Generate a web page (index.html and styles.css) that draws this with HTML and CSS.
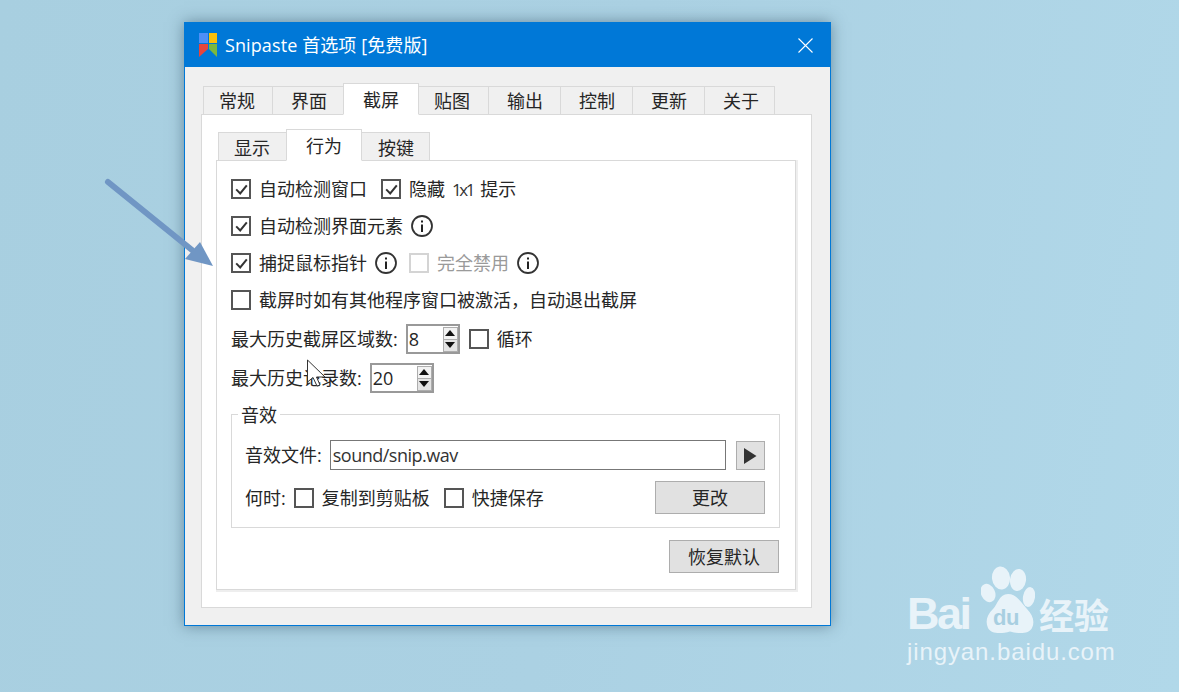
FILE: index.html
```html
<!DOCTYPE html>
<html lang="zh-CN">
<head>
<meta charset="utf-8">
<title>Snipaste 首选项</title>
<link rel="stylesheet" href="styles.css">
</head>
<body>
<svg width="0" height="0" class="defs">
  <symbol id="tick" viewBox="0 0 20 20"><path d="M5.2 10.4 L9.2 14.4 L15.8 6.4" fill="none" stroke="#333" stroke-width="2"/></symbol>
  <symbol id="info" viewBox="0 0 22 22"><circle cx="11" cy="11" r="10" fill="none" stroke="#333" stroke-width="1.8"/><rect x="10" y="9.5" width="2" height="7.5" fill="#222"/><rect x="10" y="5.5" width="2" height="2" fill="#222"/></symbol>
</svg>

<div class="window">
  <header class="titlebar">
    <svg class="logo" width="18" height="24" viewBox="0 0 18 24">
      <rect x="0" y="0" width="9" height="10" fill="#4f8ff7"/>
      <rect x="10" y="0" width="8" height="10" fill="#fbc00a"/>
      <polygon points="0,11 9,11 9,16 0,24" fill="#e8453c"/>
      <polygon points="10,11 18,11 18,24 10,16" fill="#7cb83e"/>
    </svg>
    <span class="title">Snipaste 首选项 [免费版]</span>
    <svg class="close" width="15" height="15" viewBox="0 0 15 15"><path d="M0.5 0.5 L14.5 14.5 M14.5 0.5 L0.5 14.5" stroke="#fff" stroke-width="1.1" fill="none"/></svg>
  </header>

  <div class="body">
    <nav class="tabs">
      <div class="tab tab-first">常规</div>
      <div class="tab tab-b">界面</div>
      <div class="tab tab-on">截屏</div>
      <div class="tab tab-c">贴图</div>
      <div class="tab">输出</div>
      <div class="tab">控制</div>
      <div class="tab">更新</div>
      <div class="tab tab-last">关于</div>
    </nav>
    <section class="pane">
      <nav class="subtabs">
        <div class="tab sub sub-first">显示</div>
        <div class="tab sub sub-on">行为</div>
        <div class="tab sub sub-last">按键</div>
      </nav>
      <div class="subpane">
        <div class="row">
          <span class="cb"><svg width="20" height="20"><use href="#tick"/></svg></span><span class="lbl">自动检测窗口</span>
          <span class="cb cb-next"><svg width="20" height="20"><use href="#tick"/></svg></span><span class="lbl">隐藏<span class="tight">1x1</span>提示</span>
        </div>
        <div class="row">
          <span class="cb"><svg width="20" height="20"><use href="#tick"/></svg></span><span class="lbl">自动检测界面元素</span>
          <svg class="info" width="22" height="22"><use href="#info"/></svg>
        </div>
        <div class="row">
          <span class="cb"><svg width="20" height="20"><use href="#tick"/></svg></span><span class="lbl">捕捉鼠标指针</span>
          <svg class="info" width="22" height="22"><use href="#info"/></svg>
          <span class="cb cb-off"></span><span class="lbl lbl-off">完全禁用</span>
          <svg class="info" width="22" height="22"><use href="#info"/></svg>
        </div>
        <div class="row">
          <span class="cb"></span><span class="lbl">截屏时如有其他程序窗口被激活，自动退出截屏</span>
        </div>
        <div class="row row-spin">
          <span class="text">最大历史截屏区域数:</span>
          <div class="spin spin-a"><span class="spinval">8</span>
            <span class="stepper"><span class="step step-up"><i class="up"></i></span><span class="step"><i class="down"></i></span></span>
          </div>
          <span class="cb cb-loop"></span><span class="lbl">循环</span>
        </div>
        <div class="row row-spin row-spin2">
          <span class="text">最大历史记录数:</span>
          <div class="spin spin-b"><span class="spinval">20</span>
            <span class="stepper"><span class="step step-up"><i class="up"></i></span><span class="step"><i class="down"></i></span></span>
          </div>
        </div>
        <div class="group">
          <span class="legend">音效</span>
          <div class="grow">
            <span class="text">音效文件:</span>
            <div class="field">sound/snip.wav</div>
            <button class="btn play"><svg width="13" height="16" viewBox="0 0 13 16"><polygon points="0,0 12.5,8 0,16" fill="#333"/></svg></button>
          </div>
          <div class="grow grow2">
            <span class="text">何时:</span>
            <span class="cb cb-when"></span><span class="lbl">复制到剪贴板</span>
            <span class="cb cb-next"></span><span class="lbl">快捷保存</span>
            <button class="btn change">更改</button>
          </div>
        </div>
        <div class="foot"><button class="btn restore">恢复默认</button></div>
      </div>
    </section>
  </div>
</div>

<svg class="overlay" width="1179" height="692" viewBox="0 0 1179 692">
  <path d="M108 182 L192 250" stroke="#7096c4" stroke-width="6" stroke-linecap="round" fill="none"/>
  <polygon points="213,266 185,259 200,242" fill="#7096c4"/>
  <polygon points="307.5,360 307.5,382 313,377.5 317,386 320,385 316.5,377 325,377" fill="#fff" stroke="#333" stroke-width="1"/>
</svg>

<div class="mark">
  <div class="mark-top">
    <span class="mark-bai">Bai</span>
    <span class="paw">
      <svg width="54" height="70" viewBox="0 0 54 70">
        <ellipse cx="20" cy="12" rx="9" ry="11.5" fill="#e8f3f9" transform="rotate(-6 20 12)"/>
        <ellipse cx="37" cy="14" rx="8" ry="11" fill="#e8f3f9" transform="rotate(8 37 14)"/>
        <ellipse cx="7" cy="27" rx="7" ry="9.5" fill="#e8f3f9" transform="rotate(-25 7 27)"/>
        <ellipse cx="48" cy="31" rx="6" ry="10" fill="#e8f3f9" transform="rotate(10 48 31)"/>
        <path d="M27 28 C36 28 40 37 46 43 C52 49 54 56 51 62 C48 68 38 68 29 65.5 C20 68 10 68 7 62 C4 55 6 49 12 43 C17 38 18 28 27 28 Z" fill="#e8f3f9"/>
      </svg>
      <span class="mark-du">du</span>
    </span>
    <span class="mark-cn">经验</span>
  </div>
  <div class="mark-url">jingyan.baidu.com</div>
</div>
</body>
</html>
```
FILE: styles.css
```css
* { box-sizing: border-box; }
html, body { margin: 0; height: 100%; }
body {
  width: 1179px;
  height: 692px;
  overflow: hidden;
  position: relative;
  background: linear-gradient(100deg, #a8cfe0 0%, #abd1e3 50%, #b1d8e9 100%);
  font-family: "Open Sans", "Noto Sans CJK SC", sans-serif;
  font-size: 18px;
  color: #262626;
}
.defs { position: absolute; }
.window {
  position: absolute;
  left: 184px;
  top: 22px;
  width: 647px;
  height: 604px;
  background: #f0f0f0;
  border: 1px solid #0078d7;
  box-shadow: 0 0 14px rgba(40, 70, 90, .5);
  display: flex;
  flex-direction: column;
}
.titlebar {
  height: 44px;
  background: #0078d7;
  color: #fff;
  display: flex;
  align-items: center;
  padding: 0 17px 0 14px;
  flex: none;
}
.logo { margin-right: 8px; }
.title { font-size: 18px; line-height: 1; flex: 1; letter-spacing: .1px; }
.close { flex: none; }
.body { padding: 16px 18px 0 16px; }

.tabs, .subtabs { display: flex; align-items: flex-end; }
.tabs { height: 32px; margin-bottom: -1px; padding-left: 2px; position: relative; z-index: 1; }
.tab {
  height: 29px;
  padding: 0 17px 0 18px;
  border-left: 1px solid #d9d9d9;
  border-top: 1px solid #d9d9d9;
  border-bottom: 1px solid #d9d9d9;
  background: #f0f0f0;
  line-height: 28px;
  white-space: nowrap;
}
.tab-first { padding-left: 15px; }
.tab-b { padding-right: 16px; }
.tab-on {
  height: 32px;
  padding: 0 19px;
  background: #fff;
  border-right: 1px solid #d9d9d9;
  border-bottom-color: #fff;
  line-height: 32px;
}
.tab-c { padding: 0 18px 0 15px; border-left: 0; }
.tab-last { padding-right: 15px; border-right: 1px solid #d9d9d9; }

.pane {
  height: 494px;
  background: #fff;
  border: 1px solid #d9d9d9;
  padding: 14px 15px 0 14px;
}
.subtabs { height: 32px; margin-bottom: -1px; padding-left: 2px; position: relative; z-index: 1; }
.sub { padding: 0 15px; line-height: 30px; }
.sub-first { padding: 0 16px 0 15px; }
.sub-on {
  height: 32px;
  padding: 0 19px;
  background: #fff;
  border-right: 1px solid #d9d9d9;
  border-bottom-color: #fff;
  line-height: 33px;
}
.sub-last { padding: 0 15px 0 16px; border-left: 0; border-right: 1px solid #d9d9d9; }

.subpane {
  height: 430px;
  border: 1px solid #d9d9d9;
  box-shadow: 2px 0 0 #eee, 0 2px 0 #eee, 2px 2px 0 #eee;
  padding: 18px 15px 0 14px;
  background: #fff;
}
.row {
  display: flex;
  align-items: center;
  height: 20px;
  white-space: nowrap;
}
.row + .row { margin-top: 17px; }
.cb {
  width: 20px;
  height: 20px;
  border: 2px solid #555;
  flex: none;
  display: block;
  margin-right: 8px;
  background: #fff;
  position: relative;
}
.cb svg { position: absolute; left: -2px; top: -2px; display: block; }
.cb-next { margin-left: 14px; }
.cb-off { border-color: #d4d4d4; }
.lbl { line-height: 20px; }
.lbl-off { color: #9a9a9a; }
.info { margin-left: 8px; flex: none; }
.row .info + .cb-off { margin-left: 12px; }
.tight { font-size: 17px; letter-spacing: -2.4px; margin: 0 7px 0 7px; color: #333; }

.row + .row-spin { height: 30px; margin-top: 14px; }
.row + .row-spin2 { margin-top: 9px; }
.text { line-height: 20px; }
.spin {
  height: 30px;
  border: 2px solid #999;
  background: #fff;
  display: flex;
  align-items: center;
  justify-content: space-between;
  padding: 0 0 0 1px;
  flex: none;
  margin-left: 8px;
}
.spin-a { width: 54px; }
.spin-b { width: 64px; }
.spinval { line-height: 20px; }
.stepper { display: flex; flex-direction: column; width: 15px; margin-right: 0; border: 1px solid #adadad; background: #adadad; gap: 1px; }
.step {
  height: 11px;
  background: #e4e4e4;
  display: flex;
  align-items: center;
  justify-content: center;
}
.step-up { background: #f2f2f2; }
.up { border: 5px solid transparent; border-top: 0; border-bottom: 6px solid #111; width: 0; height: 0; }
.down { border: 5px solid transparent; border-bottom: 0; border-top: 6px solid #111; width: 0; height: 0; }
.cb-loop { margin-left: 9px; }

.group {
  position: relative;
  margin-top: 21px;
  height: 114px;
  border: 1px solid #d9d9d9;
  padding: 25px 14px 0 13px;
}
.legend {
  position: absolute;
  left: 6px;
  top: -10px;
  padding: 0 3px;
  background: #fff;
  line-height: 20px;
}
.grow { display: flex; align-items: center; height: 30px; white-space: nowrap; }
.field {
  width: 396px;
  height: 30px;
  margin-left: 8px;
  border: 1px solid #777;
  padding-left: 2px;
  line-height: 29px;
  letter-spacing: -.5px;
  flex: none;
  color: #333;
}
.btn {
  font: inherit;
  color: #262626;
  background: #e1e1e1;
  border: 1px solid #adadad;
  padding: 0;
  line-height: 1;
  display: flex;
  align-items: center;
  justify-content: center;
}
.play { width: 29px; height: 29px; margin: 1px 0 0 10px; }
.grow2 { height: 33px; margin-top: 11px; }
.cb-when { margin-left: 8px; }
.change { width: 110px; height: 33px; margin-left: auto; }
.foot { display: flex; justify-content: flex-end; margin-top: 12px; padding-right: 1px; }
.restore { width: 110px; height: 33px; }

.overlay { position: absolute; left: 0; top: 0; pointer-events: none; }

.mark { position: absolute; left: 905px; top: 566px; width: 212px; color: #e8f3f9; font-family: "Liberation Sans", sans-serif; }
.mark-top { height: 70px; position: relative; display: flex; align-items: flex-end; }
.mark-bai { font-size: 45px; font-weight: 700; line-height: 1; letter-spacing: -2.5px; width: 74px; padding-bottom: 0; flex: none; margin-left: 2px; margin-right: 0; }
.paw { position: relative; display: block; width: 54px; height: 70px; flex: none; margin-left: 0; }
.paw svg { display: block; }
.mark-du { position: absolute; left: 12px; top: 41px; font-size: 22px; font-weight: 700; line-height: 1; color: #a8cfe1; letter-spacing: -.5px; }
.mark-cn { font-family: "Noto Sans CJK SC", sans-serif; font-weight: 700; font-size: 35px; line-height: 1; padding-bottom: 5px; margin-left: 4px; flex: none; }
.mark-url { font-size: 24px; line-height: 30px; margin-top: 1px; padding-left: 2px; letter-spacing: .9px; white-space: nowrap; }
```
